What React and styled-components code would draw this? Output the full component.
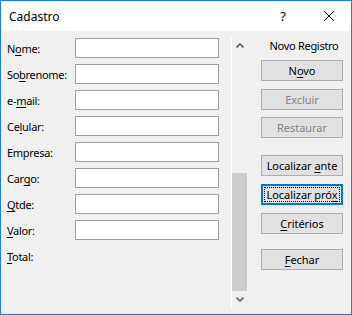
import React from 'react';
import styled, { createGlobalStyle } from 'styled-components';

const GlobalStyle = createGlobalStyle`
	html, body {
		margin: 0;
		padding: 0;
		background: #ffffff;
	}
	* {
		box-sizing: border-box;
	}
`;

const Window = styled.div`
	width: 352px;
	height: 315px;
	border: 1px solid #1883d7;
	background: #f0f0f0;
	display: flex;
	flex-direction: column;
	font-family: 'Noto Sans', sans-serif;
	font-size: 11px;
	letter-spacing: -0.3px;
	color: #000;
`;

const TitleBar = styled.div`
	height: 30px;
	background: #ffffff;
	display: flex;
	align-items: center;
	padding-left: 8px;
	font-size: 12px;
	letter-spacing: 0;
`;

const Title = styled.div`
	flex: 1;
`;

const Help = styled.div`
	width: 14px;
	margin-right: 34px;
	font-size: 13px;
	text-align: center;
`;

const Close = styled.div`
	width: 10px;
	height: 10px;
	margin-right: 17px;
	display: flex;
`;

const Body = styled.div`
	flex: 1;
	display: flex;
`;

const Form = styled.div`
	width: 230px;
	padding: 7px 0 0 6px;
	display: flex;
	flex-direction: column;
	gap: 6px;
`;

const Row = styled.div`
	height: 20px;
	display: flex;
	align-items: center;
`;

const Label = styled.div`
	width: 68px;
	flex: none;
	white-space: nowrap;
`;

const Field = styled.div`
	width: 144px;
	height: 20px;
	background: #ffffff;
	border: 1px solid #a0a0a0;
`;

const Key = styled.span`
	text-decoration: underline;
	text-underline-offset: 2px;
	text-decoration-thickness: 1px;
	text-decoration-skip-ink: none;
`;

const Scroll = styled.div`
	width: 16px;
	margin-top: 6px;
	margin-bottom: 6px;
	border-left: 1px solid #ffffff;
	display: flex;
	flex-direction: column;
	align-items: stretch;
`;

const Arrow = styled.div`
	height: 17px;
	display: flex;
	align-items: center;
	justify-content: center;
`;

const Track = styled.div`
	flex: 1;
	display: flex;
	flex-direction: column;
	justify-content: flex-end;
`;

const Thumb = styled.div`
	height: 118px;
	background: #cdcdcd;
`;

const Side = styled.div`
	flex: 1;
	padding: 7px 6px 0 14px;
	display: flex;
	flex-direction: column;
`;

const Caption = styled.div`
	height: 16px;
	text-align: center;
	padding-left: 2px;
	margin-bottom: 6px;
	line-height: 16px;
`;

const Button = styled.div`
	position: relative;
	height: 21px;
	width: 82px;
	margin-top: ${(p) => p.$gap || 0}px;
	background: #e1e1e1;
	border: 1px solid ${(p) => (p.$focus ? '#0078d7' : '#adadad')};
	box-shadow: ${(p) => (p.$focus ? 'inset 0 0 0 1px #0078d7' : 'none')};
	color: ${(p) => (p.$disabled ? '#838383' : '#000')};
	display: flex;
	align-items: center;
	justify-content: center;
	white-space: nowrap;
	letter-spacing: -0.05px;
	line-height: 1;
	padding-bottom: 1px;
	&::after {
		content: '';
		display: ${(p) => (p.$focus ? 'block' : 'none')};
		position: absolute;
		inset: 2px;
		border: 1px dotted #000;
	}
`;

const Chevron = ({ up }) => (
	<svg width="8" height="5" viewBox="0 0 8 5">
		<path
			d={up ? 'M0.5 4.5 L4 1 L7.5 4.5' : 'M0.5 0.5 L4 4 L7.5 0.5'}
			fill="none"
			stroke="#606060"
			strokeWidth="1.6"
		/>
	</svg>
);

const fields = [
	['N', 'o', 'me:'],
	['So', 'b', 'renome:'],
	['e-', 'm', 'ail:'],
	['Ce', 'l', 'ular:'],
	['Empresa:', '', ''],
	['Car', 'g', 'o:'],
	['', 'Q', 'tde:'],
	['', 'V', 'alor:'],
];

export default function App() {
	return (
		<>
			<GlobalStyle />
			<Window>
				<TitleBar>
					<Title>Cadastro</Title>
					<Help>?</Help>
					<Close>
						<svg width="10" height="10" viewBox="0 0 10 10">
							<path d="M0 0 L10 10 M10 0 L0 10" stroke="#000" strokeWidth="1" />
						</svg>
					</Close>
				</TitleBar>
				<Body>
					<Form>
						{fields.map(([a, k, b]) => (
							<Row key={a + k + b}>
								<Label>
									{a}
									{k && <Key>{k}</Key>}
									{b}
								</Label>
								<Field />
							</Row>
						))}
						<Row>
							<Label>
								<Key>T</Key>otal:
							</Label>
						</Row>
					</Form>
					<Scroll>
						<Arrow>
							<Chevron up />
						</Arrow>
						<Track>
							<Thumb />
						</Track>
						<Arrow>
							<Chevron />
						</Arrow>
					</Scroll>
					<Side>
						<Caption>Novo Registro</Caption>
						<Button>
							<span>
								N<Key>o</Key>vo
							</span>
						</Button>
						<Button $gap={8} $disabled>
							<span>Excluir</span>
						</Button>
						<Button $gap={7} $disabled>
							<span>Restaurar</span>
						</Button>
						<Button $gap={17}>
							<span>
								Localizar <Key>a</Key>nte
							</span>
						</Button>
						<Button $gap={8} $focus>
							<span>
								Localizar pró<Key>x</Key>
							</span>
						</Button>
						<Button $gap={8}>
							<span>
								<Key>C</Key>ritérios
							</span>
						</Button>
						<Button $gap={15}>
							<span>
								<Key>F</Key>echar
							</span>
						</Button>
					</Side>
				</Body>
			</Window>
		</>
	);
}
